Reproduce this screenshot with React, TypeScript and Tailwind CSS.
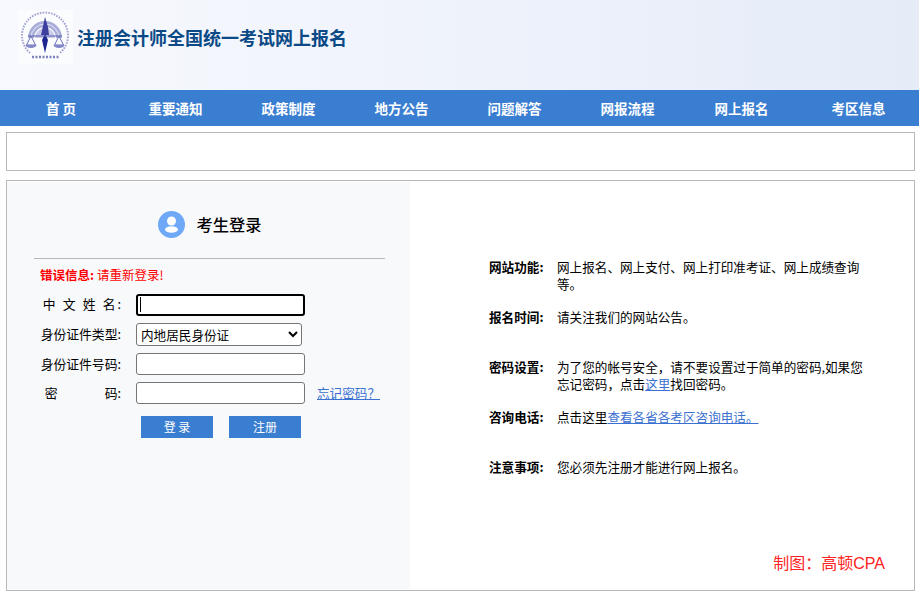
import React from "react";

const nav = [
  ["首 页", "w-[122px]"],
  ["重要通知", "w-[107px]"],
  ["政策制度", "w-[119px]"],
  ["地方公告", "w-[107px]"],
  ["问题解答", "w-[119px]"],
  ["网报流程", "w-[107px]"],
  ["网上报名", "w-[121px]"],
  ["考区信息", "w-[113px]"],
];

function Logo() {
  return (
    <svg width="55" height="54" viewBox="0 0 55 54" className="shrink-0">
      <rect width="55" height="54" fill="#fbfcfe" />
      <path d="M12 43A23 23 0 1 1 42 43" fill="none" stroke="#a3a6d2" strokeWidth="2" strokeDasharray="1.6 1.2" />
      <path d="M10 28a17 17 0 0 1 34 0h-6a11 11 0 0 0-22 0z" fill="#a9add9" />
      <path d="M13 28a14 14 0 0 1 28 0" fill="none" stroke="#e8e9f6" strokeWidth="1" />
      <path d="M17 28a10 10 0 0 1 20 0z" fill="#c9cbe8" />
      <path d="M27 7l3 10 1 8h-8l2-9z" fill="#3c3f9e" />
      <path d="M27 24l3 6-3 13-3-13z" fill="#1c2590" />
      <path d="M10 26h34" stroke="#5a5fb0" strokeWidth="1.2" />
      <path d="M13 26l-4.500 9h9zM41 26l-4.500 9h9z" fill="none" stroke="#6a6fb8" strokeWidth="1" />
      <path d="M7.500 35a5.500 3 0 0 0 11 0zM35.500 35a5.500 3 0 0 0 11 0z" fill="#8287c8" />
      <path d="M14 47h27" stroke="#7c80bd" strokeWidth="2.400" strokeDasharray="2 1.500" />
    </svg>
  );
}

function Label({ children, className = "" }: { children: React.ReactNode; className?: string }) {
  return <div className={`w-[87px] shrink-0 whitespace-pre pb-[2px] text-right text-[12.8px] leading-[17px] text-black ${className}`}>{children}</div>;
}

function InfoRow({ label, children }: { label: string; children: React.ReactNode }) {
  return (
    <div className="flex h-[50px] text-[12.6px] leading-[17px] text-black">
      <div className="w-[68px] shrink-0 font-bold">{label}</div>
      <div className="w-[307px]">{children}</div>
    </div>
  );
}

const inputCls = "h-[22px] w-[169px] rounded-[3px] border border-[#767676] bg-white";

export default function App() {
  return (
    <div className="h-[598px] w-[919px] overflow-hidden bg-white font-['Noto_Sans_CJK_SC','Liberation_Sans',sans-serif]">
      <header className="flex h-[90px] bg-gradient-to-r from-[#f8f9fe] to-[#e5ecf8] pl-[18px] pt-[10px]">
        <Logo />
        <h1 className="ml-[4px] mt-[14px] h-[26px] text-[18px] font-bold leading-[26px] text-[#0b4a86]">注册会计师全国统一考试网上报名</h1>
      </header>

      <nav className="flex h-[36px] bg-[#3a7ed1] text-[13.500px] font-bold leading-[36px] text-white">
        {nav.map(([text, w]) => (
          <div key={text} className={`${w} text-center`}>{text}</div>
        ))}
      </nav>

      <div className="mx-[6px] mt-[6px] h-[39px] w-[909px] border border-[#b8b8b8]" />

      <main className="mx-[6px] mt-[9px] flex h-[411px] w-[909px] border border-[#b8b8b8]">
        <section className="mt-[1px] h-[407px] w-[403px] bg-[#f8f9fb]">
          <div className="mt-[29px] flex items-center justify-center pl-[2px]">
            <svg width="27" height="27" viewBox="0 0 27 27" className="mr-[12px]">
              <circle cx="13.500" cy="13.500" r="13.500" fill="#6ea8f7" />
              <circle cx="13.500" cy="10" r="4.500" fill="#fff" />
              <ellipse cx="13.500" cy="18.500" rx="6.500" ry="3.200" fill="#fff" />
            </svg>
            <h2 className="text-[16.250px] font-medium leading-[27px] text-black">考生登录</h2>
          </div>
          <hr className="mx-[27px] mt-[20px] w-[351px] border-0 border-t border-[#b8b8b8]" />
          <p className="ml-[33px] mt-[7px] text-[12.500px] font-bold leading-[17px] text-[#ff0000]">
            错误信息: <span className="font-normal">请重新登录!</span>
          </p>

          <div className="ml-[27px] mt-[10px] flex h-[23px] items-center">
            <Label><span className="tracking-[7.200px]">中文姓</span><span className="tracking-[2px]">名</span>:</Label>
            <div className="ml-[15px] flex h-[22px] w-[169px] items-center rounded-[3px] border-2 border-black bg-white pl-[2px]">
              <span className="h-[15px] w-px bg-black" />
            </div>
          </div>
          <div className="ml-[27px] mt-[7px] flex h-[23px] items-center">
            <Label>身份证件类型:</Label>
            <select className="ml-[15px] h-[23px] w-[166px] rounded-[3px] border border-[#767676] bg-white pb-[2px] text-[12.6px] text-black">
              <option>内地居民身份证</option>
            </select>
          </div>
          <div className="ml-[27px] mt-[7px] flex h-[22px] items-center">
            <Label>身份证件号码:</Label>
            <input className={`ml-[15px] ${inputCls}`} />
          </div>
          <div className="ml-[27px] mt-[7px] flex h-[22px] items-center">
            <Label>密<span className="ml-[47px]">码:</span></Label>
            <input type="password" className={`ml-[15px] ${inputCls}`} />
            <a className="ml-[12px] pb-[2px] text-[12.6px] leading-[17px] text-[#3a70d0] underline">忘记密码？</a>
          </div>

          <div className="ml-[134px] mt-[12px] flex gap-[16px]">
            <button className="h-[22px] w-[72px] bg-[#3a7ed1] text-[12px] leading-[22px] text-white">登 录</button>
            <button className="h-[22px] w-[72px] bg-[#3a7ed1] text-[12px] leading-[22px] text-white">注册</button>
          </div>
        </section>

        <section className="flex flex-1 flex-col pl-[79px] pt-[77px]">
          <InfoRow label="网站功能:">网上报名、网上支付、网上打印准考证、网上成绩查询等。</InfoRow>
          <InfoRow label="报名时间:">请关注我们的网站公告。</InfoRow>
          <InfoRow label="密码设置:">
            为了您的帐号安全，请不要设置过于简单的密码,如果您忘记密码，点击<a className="text-[#3a70d0] underline">这里</a>找回密码。
          </InfoRow>
          <InfoRow label="咨询电话:">
            点击这里<a className="text-[#3a70d0] underline">查看各省各考区咨询电话。</a>
          </InfoRow>
          <InfoRow label="注意事项:">您必须先注册才能进行网上报名。</InfoRow>
          <p className="mt-auto pb-[14px] pr-[29px] text-right text-[16px] leading-[24px] text-[#ff2222]">
            制图：高顿<span className="font-['Liberation_Sans']">CPA</span>
          </p>
        </section>
      </main>
    </div>
  );
}
